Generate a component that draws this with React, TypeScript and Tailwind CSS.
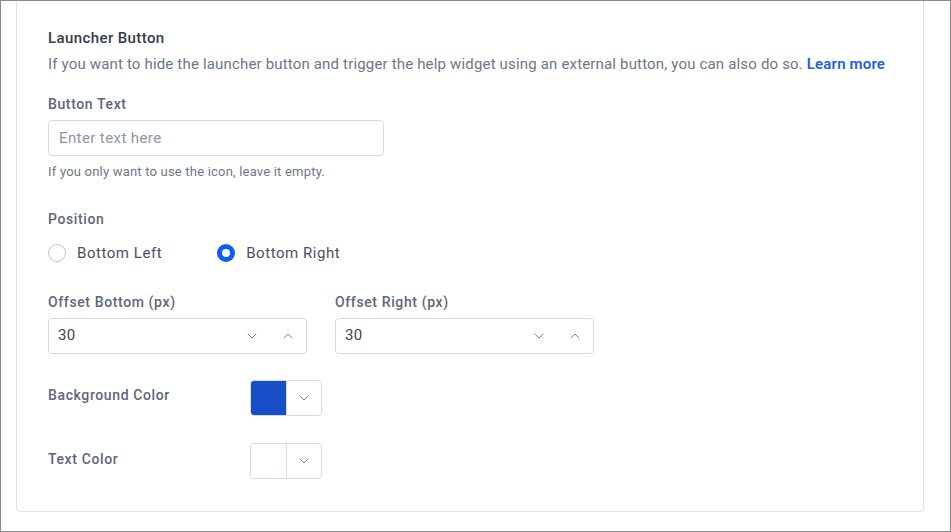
import { ChevronDown, ChevronUp } from "lucide-react";

function NumberField({ value }: { value: string }) {
  return (
    <div className="flex h-9 w-[259px] items-center rounded border border-[#d5dbe5] bg-white pl-[9px] pr-[10px]">
      <span className="flex-1 text-[15px] text-[#3a4250]">{value}</span>
      <ChevronDown className="mr-[20px] h-4 w-4 text-[#7d8797]" strokeWidth={1.5} />
      <ChevronUp className="h-4 w-4 text-[#7d8797]" strokeWidth={1.5} />
    </div>
  );
}

function ColorField({ color }: { color: string }) {
  return (
    <div className="flex h-9 w-[72px] overflow-hidden rounded border border-[#d5dbe5] bg-white">
      <div className={`w-[36px] border-r border-[#d5dbe5] ${color}`} />
      <div className="flex flex-1 items-center justify-center">
        <ChevronDown className="h-4 w-4 text-[#7d8797]" strokeWidth={1.5} />
      </div>
    </div>
  );
}

const label = "text-[14px] font-medium leading-5 tracking-[0.62px] text-[#5d6879]";

export default function App() {
  return (
    <div
      className="h-[532px] w-[951px] overflow-hidden border border-[#8a8a8a] bg-white tracking-[0.2px]"
      style={{ fontFamily: "Roboto, 'Noto Sans', sans-serif" }}
    >
      <div className="-mt-px ml-[15px] mr-[26px] h-[512px] rounded-b border border-t-0 border-[#dfe3ea] px-[31px] pt-[28px]">
        <h2 className="text-[15px] font-medium leading-5 tracking-[0.4px] text-[#343c4a]">Launcher Button</h2>
        <p className="mt-[6px] whitespace-nowrap text-[15px] leading-5 tracking-[0.17px] text-[#6c7789]">
          If you want to hide the launcher button and trigger the help widget using an external button, you can also do so.{" "}
          <a className="font-semibold text-[#1a62d8]">Learn more</a>
        </p>

        <div className={`mt-[20px] ${label}`}>Button Text</div>
        <input
          placeholder="Enter text here"
          className="mt-[6px] h-9 w-[336px] rounded border border-[#d5dbe5] px-[10px] text-[15px] tracking-[0.4px] text-[#3a4250] outline-none placeholder:text-[#8c96a7]"
        />
        <div className="mt-[6px] text-[13px] leading-5 text-[#6c7789]">If you only want to use the icon, leave it empty.</div>

        <div className={`mt-[27px] ${label}`}>Position</div>
        <div className="mt-[13px] flex items-center">
          <label className="flex items-center">
            <span className="h-[18px] w-[18px] rounded-full border border-[#bcc4d1] bg-white" />
            <span className="ml-[11px] text-[15px] tracking-[0.55px] text-[#4a5262]">Bottom Left</span>
          </label>
          <label className="ml-[55px] flex items-center">
            <span className="flex h-[18px] w-[18px] items-center justify-center rounded-full bg-[#0d5ef4]">
              <span className="h-[8px] w-[8px] rounded-full bg-white" />
            </span>
            <span className="ml-[11px] text-[15px] tracking-[0.55px] text-[#4a5262]">Bottom Right</span>
          </label>
        </div>

        <div className="mt-[27px] flex gap-[28px]">
          <div>
            <div className={label}>Offset Bottom (px)</div>
            <div className="mt-[6px]">
              <NumberField value="30" />
            </div>
          </div>
          <div>
            <div className={label}>Offset Right (px)</div>
            <div className="mt-[6px]">
              <NumberField value="30" />
            </div>
          </div>
        </div>

        <div className="mt-[26px] flex items-start">
          <div className={`w-[202px] pt-[5px] ${label}`}>Background Color</div>
          <ColorField color="bg-[#1750c6]" />
        </div>
        <div className="mt-[27px] flex items-start">
          <div className={`w-[202px] pt-[6px] ${label}`}>Text Color</div>
          <ColorField color="bg-white" />
        </div>
      </div>
    </div>
  );
}
